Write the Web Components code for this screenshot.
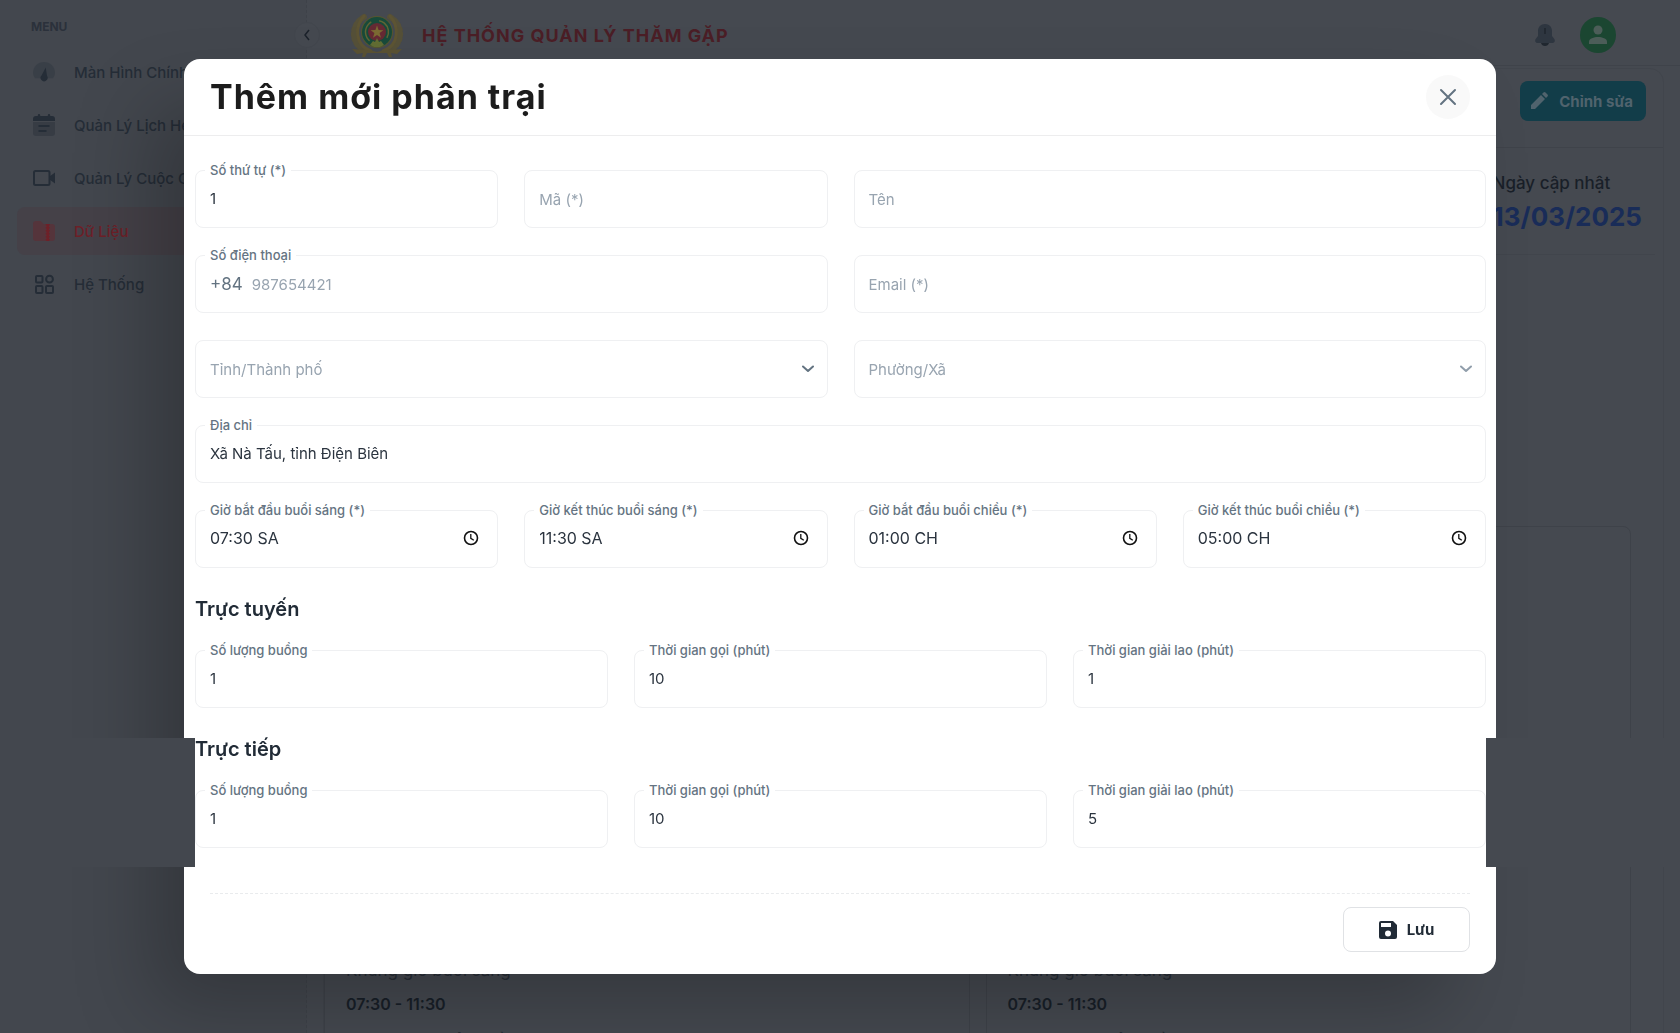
<!DOCTYPE html>
<html lang="vi">
<head>
<meta charset="utf-8">
<title>Hệ thống quản lý thăm gặp</title>
<style>
  html, body { margin: 0; height: 100%; }
  body {
    overflow: hidden;
    font-family: Inter, "Noto Sans", sans-serif;
    font-size: 15px;
    color: #212b36;
    background: #454950;
  }
</style>
</head>
<body>
<app-shell>
  <side-nav slot="nav">
    <nav-item icon="gauge">Màn Hình Chính</nav-item>
    <nav-item icon="calendar">Quản Lý Lịch Hẹn</nav-item>
    <nav-item icon="video">Quản Lý Cuộc Gọi</nav-item>
    <nav-item icon="folder" active>Dữ Liệu</nav-item>
    <nav-item icon="grid">Hệ Thống</nav-item>
  </side-nav>
  <top-bar slot="top">HỆ THỐNG QUẢN LÝ THĂM GẶP</top-bar>
  <detail-card>
    <time-card></time-card>
    <time-card></time-card>
  </detail-card>
</app-shell>

<modal-dialog heading="Thêm mới phân trại">
  <form-section>
    <form-field label="Số thứ tự (*)" value="1"></form-field>
    <form-field placeholder="Mã (*)"></form-field>
    <form-field placeholder="Tên" class="half"></form-field>
    <form-field label="Số điện thoại" prefix="+84" placeholder="987654421" class="half"></form-field>
    <form-field placeholder="Email (*)" class="half"></form-field>
    <select-field placeholder="Tỉnh/Thành phố" class="half"></select-field>
    <select-field placeholder="Phường/Xã" muted class="half"></select-field>
    <form-field label="Địa chỉ" value="Xã Nà Tấu, tỉnh Điện Biên" class="full"></form-field>
    <form-field label="Giờ bắt đầu buổi sáng (*)" value="07:30 SA" clock></form-field>
    <form-field label="Giờ kết thúc buổi sáng (*)" value="11:30 SA" clock></form-field>
    <form-field label="Giờ bắt đầu buổi chiều (*)" value="01:00 CH" clock></form-field>
    <form-field label="Giờ kết thúc buổi chiều (*)" value="05:00 CH" clock></form-field>
  </form-section>
  <form-section heading="Trực tuyến" thirds>
    <form-field label="Số lượng buồng" value="1"></form-field>
    <form-field label="Thời gian gọi (phút)" value="10"></form-field>
    <form-field label="Thời gian giải lao (phút)" value="1"></form-field>
  </form-section>
  <form-section heading="Trực tiếp" thirds banded>
    <form-field label="Số lượng buồng" value="1"></form-field>
    <form-field label="Thời gian gọi (phút)" value="10"></form-field>
    <form-field label="Thời gian giải lao (phút)" value="5"></form-field>
  </form-section>
</modal-dialog>

<script>
const ICONS = {
  gauge: `<path opacity=".3" d="M12 2C6 2 1 6.700 1 12.500c0 2.500.8 4.300 2 5.800h18c1.200-1.500 2-3.300 2-5.800C23 6.700 18 2 12 2z"/><path d="M13.700 7.500 15 15.800a3.500 3.500 0 1 1-5.300-.6z"/>`,
  calendar: `<path opacity=".4" d="M1 9h22v11a3 3 0 0 1-3 3H4a3 3 0 0 1-3-3z"/><path d="M7 1a1.200 1.200 0 0 1 1.200 1.200V3h7.600v-.8a1.200 1.200 0 0 1 2.400 0V3H20a3 3 0 0 1 3 3v2H1V6a3 3 0 0 1 3-3h1.800v-.8A1.200 1.200 0 0 1 7 1zM6.500 12h11v2h-11zM6.500 17h8v2h-8z"/>`,
  video: `<rect x="2" y="5" width="15.500" height="14" rx="1.500" fill="none" stroke="currentColor" stroke-width="2"/><path d="m17.500 10.500 5.500-4v11l-5.500-4z"/>`,
  folder: `<path opacity=".4" d="M1 5a3 3 0 0 1 3-3h4.500l3 3H20a3 3 0 0 1 3 3v11a3 3 0 0 1-3 3H4a3 3 0 0 1-3-3z"/><path d="M14.500 5h2.500v17h-2.500z"/><path d="M15.750 5v17" stroke="currentColor" stroke-width="4" stroke-dasharray="1.500 1.500"/>`,
  grid: `<g fill="none" stroke="currentColor" stroke-width="2"><rect x="4" y="4" width="6.500" height="6.500" rx="1"/><circle cx="17.500" cy="7.200" r="3.400"/><rect x="4" y="14" width="6.500" height="7" rx="1"/><rect x="14" y="14" width="7" height="7" rx="1"/></g>`
};

const define = (name, render) => customElements.define(name, class extends HTMLElement {
  connectedCallback() {
    if (this.shadowRoot) return;
    this.attachShadow({ mode: "open" }).innerHTML =
      `<style>*{box-sizing:border-box}:host{display:block;box-sizing:border-box}button,input,select{font:inherit;color:inherit}svg{display:block}</style>` + render(this);
  }
});

define("app-shell", () => `
  <style>
    :host { display: flex; height: 100vh; overflow: hidden; }
    .nav { flex: 0 0 307px; border-right: 1px dashed #3e4249; background: #43474e; }
    .main { flex: 1; min-width: 0; display: flex; flex-direction: column; }
    .content { flex: 1; padding: 2px 16px 0; }
  </style>
  <div class="nav"><slot name="nav"></slot></div>
  <div class="main"><slot name="top"></slot><div class="content"><slot></slot></div></div>`);

define("side-nav", () => `
  <style>
    h2 { margin: 0; padding: 17px 31px 11px; font-size: 12px; line-height: 20px; font-weight: 700; color: #2b313b; }
    nav { display: flex; flex-direction: column; gap: 5px; padding: 0 17px; }
  </style>
  <h2>MENU</h2><nav><slot></slot></nav>`);

define("nav-item", el => `
  <style>
    a { display: flex; align-items: center; gap: 18px; height: 48px; padding-left: 15px; border-radius: 8px;
        color: #252d37; font-weight: 500; text-decoration: none; white-space: nowrap; }
    :host([active]) a { background: #454148; color: #6e2028; }
    svg { width: 24px; height: 24px; }
  </style>
  <a href="#"><svg viewBox="0 0 24 24" fill="currentColor">${ICONS[el.getAttribute("icon")]}</svg><slot></slot></a>`);

define("top-bar", () => `
  <style>
    :host { flex: none; display: flex; align-items: center; height: 66px; border-bottom: 1px solid #3f434a; padding: 8px 64px 3px 0; }
    .toggle { width: 26px; height: 26px; margin-left: -13px; padding: 0; border: 1px solid #42464d; border-radius: 50%;
      background: #454950; color: #1b222b; display: grid; place-items: center; }
    .logo { width: 54px; height: 46px; margin-left: 30px; }
    h1 { margin: 0 auto 0 18px; font-size: 18px; font-weight: 700; letter-spacing: 1px; color: #4b1e26; white-space: nowrap; }
    .bell { padding: 0; border: 0; background: none; color: #2e3640; margin-right: 24px; }
    .user { width: 36px; height: 36px; padding: 0; border: 0; border-radius: 50%; background: #1b4631; color: #4c5d58; display: grid; place-items: center; }
  </style>
  <button class="toggle" aria-label="Thu gọn"><svg width="12" height="12" viewBox="0 0 12 12" fill="none" stroke="currentColor" stroke-width="1.500"><path d="M8 1 4 6l4 5"/></svg></button>
  <svg class="logo" viewBox="0 0 54 46">
    <g fill="none" stroke="#555038" stroke-width="6" stroke-linecap="round" stroke-dasharray="2 3">
      <path d="M14 5C-1 14 1 35 18 39"/><path d="M40 5c15 9 13 30-4 34"/>
    </g>
    <g fill="none" stroke="#5d5433" stroke-width="3" stroke-linecap="round"><path d="M14 4C5 14 4 33 21 39"/><path d="M40 4c9 10 10 29-7 35"/></g>
    <path d="M2 37c8 1 14 0 25 3 11-3 17-2 25-3l-5 5-6-1 1 4h-3l-2-4H17l-2 4h-3l1-4-6 1z" fill="#5a5233"/>
    <circle cx="27" cy="20" r="16" fill="#56562f"/><circle cx="27" cy="20" r="15" fill="#184a3a"/>
    <circle cx="27" cy="20" r="11.500" fill="none" stroke="#5f6534" stroke-width="1.500" stroke-dasharray="22 8 22 20" transform="rotate(130 27 20)"/>
    <circle cx="27" cy="20" r="9" fill="#652a33"/>
    <path d="m27 13.500 1.600 4.600 4.800.1-3.800 2.900 1.400 4.700-4-2.800-4 2.800 1.400-4.700-3.800-2.900 4.800-.1z" fill="#7c6b33"/>
    <path d="m20 33 3-4 2 1 2-4 2 4 2-1 3 4-4 2h-6z" fill="#626d33"/>
  </svg>
  <h1><slot></slot></h1>
  <button class="bell" aria-label="Thông báo"><svg width="22" height="24" viewBox="0 0 22 24"><path fill="currentColor" d="M11 1c-4.300 0-7 3-7 7v5l-2.500 3.300C.5 18.500 2 20 3.500 20h15c1.500 0 3-1.500 2-3.700L18 13V8c0-4-2.700-7-7-7z"/><path fill="#20272f" d="M7 20h8c-.5 2-2 3-4 3s-3.500-1-4-3zM10.200 5h1.600v6h-1.600z"/></svg></button>
  <button class="user" aria-label="Tài khoản"><svg width="20" height="20" viewBox="0 0 20 20" fill="currentColor"><circle cx="10" cy="5" r="4.500"/><path d="M1 19v-2.500C1 13.500 6 12 10 12s9 1.500 9 4.500V19z"/></svg></button>`);

define("detail-card", () => `
  <style>
    :host { border: 1px solid #41454c; border-radius: 14px; height: 1100px; }
    .bar { display: flex; justify-content: flex-end; padding: 12px 17px 26px; border-bottom: 1px solid #3f434a; }
    .edit { display: flex; align-items: center; gap: 11px; height: 40px; padding: 0 13px 0 10px; border: 0; border-radius: 8px;
      background: #123d49; color: #50636d; font-weight: 700; }
    .info { display: flex; justify-content: flex-end; margin: 0 8px; padding: 23px 13px 15px; border-bottom: 1px solid #41454c; }
    .label { font-size: 17px; line-height: 24px; font-weight: 500; color: #191f28; }
    .date { font-size: 26px; line-height: 44px; font-weight: 700; color: #192c58; }
    .rows { display: flex; gap: 16px; margin: 271px 32px 0 0; }
    ::slotted(*) { flex: 1; }
  </style>
  <div class="bar"><button class="edit"><svg width="18" height="18" viewBox="0 0 18 18" fill="currentColor"><path d="M1 13 11 3l4 4L5 17H1zM12 2l1.500-1.500a1.500 1.500 0 0 1 2 0l2 2a1.500 1.500 0 0 1 0 2L16 6z"/></svg>Chỉnh sửa</button></div>
  <div class="info"><div><div class="label">Ngày cập nhật</div><div class="date">13/03/2025</div></div></div>
  <div class="rows"><slot></slot></div>`);

define("time-card", () => `
  <style>
    :host { border: 1px solid #3e4249; border-radius: 8px; height: 700px; padding: 426px 21px 0; }
    dl { margin: 0; line-height: 34px; }
    dt { font-size: 17px; color: #272d36; }
    dd { margin: 0 0 4px; font-size: 16px; font-weight: 600; color: #181f28; }
  </style>
  <dl><dt>Khung giờ buổi sáng</dt><dd>07:30 - 11:30</dd><dt>Khung giờ buổi chiều</dt></dl>`);

define("modal-dialog", el => `
  <style>
    :host { position: fixed; inset: 0; display: flex; align-items: center; justify-content: center; }
    .dialog { width: calc(100% - 64px); max-width: 1312px; background: #fff; border-radius: 16px;
      box-shadow: -40px 40px 80px -8px rgba(0,0,0,.24); }
    header { display: flex; align-items: center; justify-content: space-between; height: 77px; padding: 0 26px; border-bottom: 1px solid #ededee; }
    h2 { margin: 0; font-size: 34px; line-height: 44px; font-weight: 700; letter-spacing: 1px; color: #1c1c1c; }
    .close { width: 44px; height: 44px; padding: 0; border: 0; border-radius: 50%; background: #f9f9f9; color: #637381; display: grid; place-items: center; }
    .body { display: flex; flex-direction: column; gap: 27px; padding: 34px 10px 0 11px; }
    footer { display: flex; justify-content: flex-end; margin: 45px 26px 0; padding: 13px 0 22px; border-top: 1px dashed #e9ebed; }
    .save { display: flex; align-items: center; justify-content: center; gap: 10px; height: 45px; min-width: 127px; border: 1px solid #e0e2e5; border-radius: 8px;
      background: #fff; color: #212b36; font-weight: 700; }
  </style>
  <form class="dialog" role="dialog" aria-labelledby="t">
    <header><h2 id="t">${el.getAttribute("heading")}</h2>
      <button type="button" class="close" aria-label="Đóng"><svg width="18" height="18" viewBox="0 0 18 18" fill="none" stroke="currentColor" stroke-width="2" stroke-linecap="round"><path d="m2 2 14 14M16 2 2 16"/></svg></button></header>
    <div class="body"><slot></slot></div>
    <footer><button type="button" class="save"><svg width="18" height="18" viewBox="0 0 18 18"><path fill="currentColor" fill-rule="evenodd" d="M2 0h12l4 4v12a2 2 0 0 1-2 2H2a2 2 0 0 1-2-2V2a2 2 0 0 1 2-2zm0 2v4h10V2zm7 7.500a3 3 0 1 0 0 6 3 3 0 0 0 0-6z"/></svg>Lưu</button></footer>
  </form>`);

define("form-section", el => `
  <style>
    :host { position: relative; }
    h3 { margin: 0 0 27px; font-size: 20px; line-height: 28px; font-weight: 600; color: #212b36; }
    .grid { display: grid; grid-template-columns: repeat(4, minmax(0, 1fr)); gap: 27px 26px; }
    :host([thirds]) .grid { grid-template-columns: repeat(3, minmax(0, 1fr)); }
    ::slotted(.half) { grid-column: span 2; }
    ::slotted(.full) { grid-column: 1 / -1; }
    :host([banded])::before, :host([banded])::after { content: ""; position: absolute; top: 3px; bottom: -19px; width: 100vw; }
    :host([banded])::before { right: 100%; background: #43474e; }
    :host([banded])::after { left: 100%; background: #454950; }
  </style>
  ${el.hasAttribute("heading") ? `<h3>${el.getAttribute("heading")}</h3>` : ""}
  <div class="grid"><slot></slot></div>`);

const FIELD_CSS = `
  .box { position: relative; display: flex; align-items: center; height: 58px; border: 1px solid #eff0f2; border-radius: 8px; padding: 0 14px; }
  label { position: absolute; top: -10px; left: 9px; padding: 0 5px; background: #fff; font-size: 13px; line-height: 18px; font-weight: 500; color: #657482; white-space: nowrap; }
  input, select { flex: 1; min-width: 0; width: 100%; height: 100%; padding: 0; border: 0; outline: 0; background: none; color: #2b343f; }
  input::placeholder { color: #98a4b0; opacity: 1; }`;

define("form-field", el => {
  const label = el.getAttribute("label"), hint = el.getAttribute("placeholder") || "";
  return `
  <style>${FIELD_CSS}
    .prefix { margin-right: 9px; font-size: 17px; color: #637381; }
    .clock { padding: 0; border: 0; background: none; color: #111; margin-right: 4px; }
    :host([clock]) input { font-size: 16px; }
    :host([value]) .box { padding-bottom: 2px; }
  </style>
  <div class="box">
    ${label ? `<label for="f">${label}</label>` : ""}
    ${el.hasAttribute("prefix") ? `<span class="prefix">${el.getAttribute("prefix")}</span>` : ""}
    <input id="f" type="text" value="${el.getAttribute("value") || ""}" placeholder="${hint}" ${label ? "" : `aria-label="${hint}"`}>
    ${el.hasAttribute("clock") ? `<button type="button" class="clock" aria-label="Chọn giờ"><svg width="16" height="16" viewBox="0 0 16 16" fill="none" stroke="currentColor"><circle cx="8" cy="8" r="6.500" stroke-width="1.600"/><path d="M7.800 4v4.300l3 2" stroke-width="1.300"/></svg></button>` : ""}
  </div>`;
});

define("select-field", el => `
  <style>${FIELD_CSS}
    select { appearance: none; color: #98a4b0; }
    .box { padding-right: 13px; }
    svg { color: #637381; pointer-events: none; }
    :host([muted]) svg { color: #919eab; }
  </style>
  <div class="box">
    <select aria-label="${el.getAttribute("placeholder")}"><option>${el.getAttribute("placeholder")}</option></select>
    <svg width="12" height="8" viewBox="0 0 12 8" fill="none" stroke="currentColor" stroke-width="2" stroke-linecap="round" stroke-linejoin="round"><path d="m1 1.500 5 4.500 5-4.500"/></svg>
  </div>`);
</script>
</body>
</html>
